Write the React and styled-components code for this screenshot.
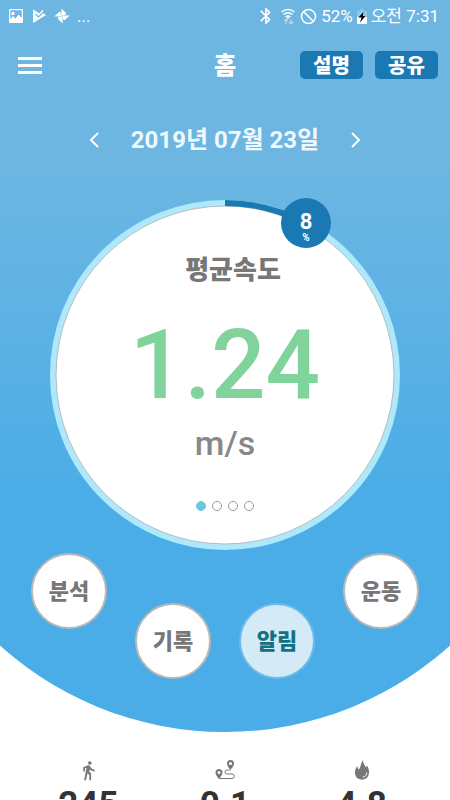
import React from 'react'
import styled, { createGlobalStyle } from 'styled-components'
import { MdBluetooth, MdDirectionsWalk } from 'react-icons/md'

const date = '2019년 07월 23일'

const slides = ['평균속도', '걸음수', '거리', '칼로리']

const Photo = () => (
  <StatusIcon width='16' height='16' viewBox='0 0 16 16'>
    <path fillRule='evenodd' d='M2 1h12a1 1 0 0 1 1 1v12a1 1 0 0 1-1 1H2a1 1 0 0 1-1-1V2a1 1 0 0 1 1-1zm.3 1.300v8.700L5 8l2.500 2.500L10.500 6.500l3.200 3.500V2.300zM3.500 4h3v3h-3z' />
  </StatusIcon>
)

const PlayCheck = () => (
  <StatusIcon width='16' height='16' viewBox='0 0 16 16'>
    <path d='M2 1.500L5.500 3.500 8 5.500 12 1.500 12.500 5.500 15 7 2 15z' />
    <path d='M4.500 6l3 3 6-6' fill='none' stroke='#6db6e2' strokeWidth='1.200' />
  </StatusIcon>
)

const Pinwheel = () => (
  <StatusIcon width='16' height='16' viewBox='0 0 16 16'>
    {[0, 90, 180, 270].map((angle) => (
      <path key={angle} transform={`rotate(${angle} 8 8)`} d='M7.400 7.400V.4L12 5v1.500L9 7.400z' />
    ))}
  </StatusIcon>
)

const Wifi = () => (
  <StatusIcon width='16' height='18' viewBox='0 0 16 18'>
    <g fill='none' stroke='#fff' strokeWidth='1.500'>
      <path d='M1.500 5Q8 0 14.500 5M3.500 7.500Q8 4 12.500 7.500M5.500 10Q8 8 10.500 10' />
      <path d='M6 17v-5M4 14l2-2 2 2M11 12v5M9 15l2 2 2-2' opacity='.5' strokeWidth='1.200' />
    </g>
    <circle cx='8' cy='11' r='1' />
  </StatusIcon>
)

const Blocked = () => (
  <StatusIcon width='17' height='17' viewBox='0 0 17 17'>
    <g fill='none' stroke='#fff' strokeWidth='1.500'>
      <circle cx='8.500' cy='8.500' r='7' />
      <path d='M3.500 3.500l10 10' />
    </g>
  </StatusIcon>
)

const Battery = () => (
  <StatusIcon width='10' height='15' viewBox='0 0 10 15'>
    <path d='M3 0h4v2h3v13H0V2h3z' opacity='.25' />
    <path d='M0 8h10v7H0z' />
    <path d='M6.500 3L1.500 8.500H4.500L3 13.500 8.500 7H5.800z' fill='#000' />
  </StatusIcon>
)

const Chevron = ({ flip }) => (
  <svg width='10' height='16' viewBox='0 0 10 16' fill='none' stroke='#fff' strokeWidth='2'>
    <path d={flip ? 'M1 1l7 7-7 7' : 'M9 1L2 8l7 7'} />
  </svg>
)

const Route = () => (
  <svg width='20' height='20' viewBox='0 0 20 20' fill='#777'>
    <path fillRule='evenodd' d='M4 9a3.500 3.500 0 0 1 3.500 3.500C7.500 15 4 19 4 19S.5 15 .5 12.500A3.500 3.500 0 0 1 4 9zm0 2a1.500 1.500 0 1 0 0 3 1.500 1.500 0 0 0 0-3z' />
    <path fillRule='evenodd' d='M15.500 0A3.500 3.500 0 0 1 19 3.500C19 6 15.500 10 15.500 10S12 6 12 3.500A3.500 3.500 0 0 1 15.500 0zm0 2a1.500 1.500 0 1 0 0 3 1.500 1.500 0 0 0 0-3z' />
    <path d='M4 18.500h13a2 2 0 0 0 0-4.500h-5a2 2 0 0 1 0-4h3.500' fill='none' stroke='#777' />
  </svg>
)

const Flame = () => (
  <svg width='14' height='20' viewBox='0 0 14 20'>
    <path fill='#777' d='M8 0c0 4 2 5.500 3 7.500l1-2c1.300 2 2 4 2 6.500C14 17 11 19.500 7 19.500S0 17 0 12.500C0 10 .8 8 2.500 6c0 2 .5 3 1.500 3.500C6 7 5.500 3 8 0z' />
    <path fill='none' stroke='#fff' d='M11.800 12.500c0 2.500-1.500 4.500-4 4.500' />
  </svg>
)

const stats = [
  { name: '걸음', value: '245', icon: <MdDirectionsWalk size={21} /> },
  { name: '거리', value: '0.1', icon: <Route /> },
  { name: '칼로리', value: '4.8', icon: <Flame /> }
]

const App = () => (
  <Page>
    <GlobalStyle />
    <Hero>
      <StatusBar>
        <StatusGroup $gap={7}>
          <Photo />
          <PlayCheck />
          <Pinwheel />
          <StatusText>...</StatusText>
        </StatusGroup>
        <StatusGroup $gap={4}>
          <MdBluetooth size={20} />
          <Wifi />
          <Blocked />
          <StatusText>52%</StatusText>
          <Battery />
          <StatusText>오전 7:31</StatusText>
        </StatusGroup>
      </StatusBar>

      <Header>
        <MenuButton aria-label='메뉴'><i /><i /><i /></MenuButton>
        <Title>홈</Title>
        <Actions>
          <ActionButton>설명</ActionButton>
          <ActionButton>공유</ActionButton>
        </Actions>
      </Header>

      <DateNav>
        <ArrowButton aria-label='이전 날짜'><Chevron /></ArrowButton>
        <DateText>{date}</DateText>
        <ArrowButton aria-label='다음 날짜'><Chevron flip /></ArrowButton>
      </DateNav>

      <Gauge>
        <Ring viewBox='0 0 350 350'>
          <circle cx='175' cy='175' r='172' fill='#fff' stroke='#aee8fb' strokeWidth='6' />
          <circle cx='175' cy='175' r='169' fill='none' stroke='#b5bcc0' />
          <path d='M175 3A172 172 0 0 1 257 24' fill='none' stroke='#1a79b3' strokeWidth='6' />
        </Ring>
        <Badge>8<small>%</small></Badge>
        <GaugeName>{slides[0]}</GaugeName>
        <GaugeValue>1.24</GaugeValue>
        <GaugeUnit>m/s</GaugeUnit>
        <Dots>
          {slides.map((slide, i) => (
            <Dot key={slide} aria-label={slide} $active={i === 0} />
          ))}
        </Dots>
      </Gauge>

      <Menu>
        <RoundButton>분석</RoundButton>
        <RoundButton $low>기록</RoundButton>
        <RoundButton $low $pressed>알림</RoundButton>
        <RoundButton>운동</RoundButton>
      </Menu>
    </Hero>

    <Stats>
      {stats.map(({ name, value, icon }) => (
        <Stat key={name} aria-label={name}>
          <StatIcon>{icon}</StatIcon>
          <StatValue>{value}</StatValue>
        </Stat>
      ))}
    </Stats>
  </Page>
)

const GlobalStyle = createGlobalStyle`
  * {
    box-sizing: border-box;
  }

  body {
    margin: 0;
    background: #fff;
    font-family: Roboto, 'Noto Sans CJK KR', sans-serif;
  }

  button {
    padding: 0;
    border: 0;
    background: none;
    font-family: inherit;
    cursor: pointer;
  }

  svg {
    display: block;
  }
`

const Page = styled.div`
  height: 100vh;
  overflow: hidden;
`

const Hero = styled.main`
  position: relative;
  isolation: isolate;
  padding-bottom: 53px;

  &:before {
    content: '';
    position: absolute;
    z-index: -1;
    top: 0;
    bottom: 0;
    left: -24%;
    right: -24%;
    background: linear-gradient(#6db6e2 22%, #4bade7 68%);
    border-radius: 0 0 50% 50% / 0 0 45% 45%;
  }
`

const StatusBar = styled.div`
  display: flex;
  align-items: center;
  justify-content: space-between;
  height: 32px;
  padding: 0 11px 0 8px;
  color: #fff;
`

const StatusGroup = styled.div`
  display: flex;
  align-items: center;
  gap: ${(props) => props.$gap}px;
`

const StatusIcon = styled.svg`
  fill: #fff;
`

const StatusText = styled.span`
  font-size: 17px;
  line-height: 24px;
`

const Header = styled.header`
  display: grid;
  grid-template-columns: 1fr auto 1fr;
  align-items: center;
  height: 66px;
  padding: 0 12px;
`

const MenuButton = styled.button`
  display: grid;
  gap: 4px;
  width: 24px;
  margin-left: 6px;

  & i {
    height: 3px;
    background: #fff;
  }
`

const Title = styled.h1`
  margin: 0;
  padding-top: 2px;
  color: #fff;
  font-size: 24px;
  font-weight: 900;
  line-height: 32px;
`

const Actions = styled.div`
  display: flex;
  justify-content: flex-end;
  gap: 12px;
`

const ActionButton = styled.button`
  width: 63px;
  height: 28px;
  padding-top: 2px;
  border-radius: 5px;
  background: #1a79b3;
  color: #fff;
  font-size: 20px;
  font-weight: 900;
  line-height: 26px;
`

const DateNav = styled.nav`
  display: flex;
  align-items: center;
  justify-content: center;
  gap: 32px;
  height: 84px;
`

const ArrowButton = styled.button`
  display: flex;
`

const DateText = styled.time`
  color: #eff8fd;
  font-size: 24px;
  font-weight: 700;
  line-height: 32px;
`

const Gauge = styled.section`
  position: relative;
  isolation: isolate;
  display: flex;
  flex-direction: column;
  align-items: center;
  width: 350px;
  height: 350px;
  margin: 18px auto 0;
  padding-top: 50px;
`

const Ring = styled.svg`
  position: absolute;
  z-index: -1;
  inset: 0;
`

const Badge = styled.div`
  position: absolute;
  top: -2px;
  right: 69px;
  display: flex;
  flex-direction: column;
  align-items: center;
  width: 50px;
  height: 50px;
  padding-top: 12px;
  border-radius: 50%;
  background: #1a79b3;
  color: #fff;
  font-size: 22px;
  font-weight: 700;
  line-height: 24px;

  & small {
    font-size: 10px;
    line-height: 8px;
  }
`

const GaugeName = styled.h2`
  margin: 0;
  padding-left: 16px;
  color: #777;
  font-size: 26px;
  font-weight: 900;
  line-height: 40px;
`

const GaugeValue = styled.div`
  margin-top: 20px;
  color: #80d39b;
  font-size: 96px;
  font-weight: 500;
  line-height: 110px;
`

const GaugeUnit = styled.div`
  color: #888;
  font-size: 34px;
  font-weight: 500;
  line-height: 46px;
`

const Dots = styled.div`
  display: flex;
  gap: 6px;
  margin-top: 35px;
`

const Dot = styled.button`
  width: 10px;
  height: 10px;
  border: 1px solid ${(props) => props.$active ? '#68c9e3' : '#999'};
  border-radius: 50%;
  background: ${(props) => props.$active ? '#68c9e3' : '#fff'};
`

const Menu = styled.div`
  display: flex;
  justify-content: center;
  align-items: flex-start;
  gap: 28px;
  padding-top: 3px;
`

const RoundButton = styled.button`
  width: 76px;
  height: 76px;
  margin-top: ${(props) => props.$low ? 50 : 0}px;
  padding-bottom: 4px;
  border: 2px solid ${(props) => props.$pressed ? '#6bbbe9' : '#b8b8b8'};
  border-radius: 50%;
  background: ${(props) => props.$pressed ? '#d5eaf7' : '#fff'};
  color: ${(props) => props.$pressed ? '#167083' : '#777'};
  font-size: 22px;
  font-weight: 900;
`

const Stats = styled.footer`
  display: grid;
  grid-template-columns: repeat(3, 1fr);
  padding: 28px 20px 0;
`

const Stat = styled.div`
  display: flex;
  flex-direction: column;
  align-items: center;
  color: #777;
`

const StatIcon = styled.span`
  display: flex;
  align-items: center;
  height: 20px;
`

const StatValue = styled.strong`
  margin-top: 4px;
  color: #333;
  font-size: 35px;
  font-weight: 700;
  line-height: 42px;
`

export default App
